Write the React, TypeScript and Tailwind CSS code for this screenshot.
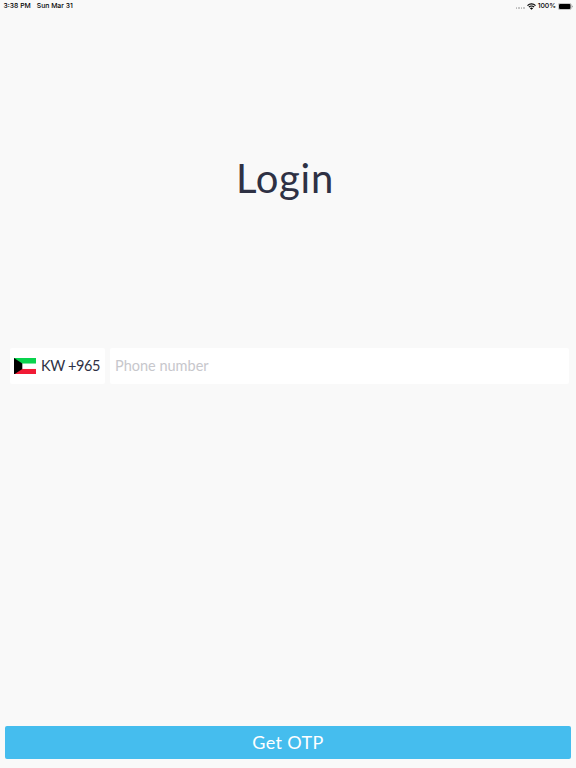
function WifiIcon() {
  return (
    <svg className="h-[7px] w-[9px]" viewBox="0 0 18 14" aria-hidden="true">
      <path d="M1 5.2a11.5 11.5 0 0 1 16 0M3.8 8.3a7.4 7.4 0 0 1 10.4 0" fill="none" stroke="#000" strokeWidth="2.5" />
      <path d="M9 13.5 5.8 10.3a4.6 4.6 0 0 1 6.4 0z" fill="#000" />
    </svg>
  );
}

function BatteryIcon() {
  return (
    <svg className="h-[7px] w-[15px]" viewBox="0 0 30 14" aria-hidden="true">
      <rect x="0.5" y="0.8" width="26" height="12.4" rx="3" fill="none" stroke="#888" />
      <rect x="2" y="2" width="23" height="10" rx="2" fill="#000" />
      <path d="M28 5v4c1.8-.7 1.8-3.3 0-4z" fill="#777" />
    </svg>
  );
}

function KuwaitFlag() {
  return (
    <svg className="h-[16.5px] w-[22.5px] shrink-0" viewBox="0 0 23 17" preserveAspectRatio="none" aria-hidden="true">
      <path d="M0 0h23v17H0z" fill="#fff" />
      <path d="M0 0h23v5.7H0z" fill="#09d34d" />
      <path d="M0 11.3h23V17H0z" fill="#f11b35" />
      <path d="M0 0l8.5 5.7v5.6L0 17z" fill="#000" />
    </svg>
  );
}

function StatusBar() {
  return (
    <header className="flex h-3 items-center justify-between pr-[3px] pl-[3.5px] text-[6.8px] leading-3 font-medium text-black">
      <div className="flex gap-1.5">
        <span>3:38 PM</span>
        <span>Sun Mar 31</span>
      </div>
      <div className="flex items-center">
        <div className="mt-1 mr-[2px] flex gap-[1px]">
          <i className="size-[1.5px] rounded-full bg-[#b5b5b5]" />
          <i className="size-[1.5px] rounded-full bg-[#b5b5b5]" />
          <i className="size-[1.5px] rounded-full bg-[#b5b5b5]" />
          <i className="size-[1.5px] rounded-full bg-[#b5b5b5]" />
        </div>
        <WifiIcon />
        <span className="mr-0.5 ml-0.5">100%</span>
        <BatteryIcon />
      </div>
    </header>
  );
}

export default function App() {
  return (
    <div className="flex h-screen flex-col bg-[#f9f9f9] font-['Inter',sans-serif]">
      <StatusBar />
      <main className="flex flex-1 flex-col font-['Lato',sans-serif]">
        <h1 className="mt-[136px] mr-[6px] h-[60px] text-center text-[40px] leading-[60px] tracking-[0.7px] text-[#2e3144]">
          Login
        </h1>
        <div className="mt-[140px] flex h-9 gap-[5px] pr-[7px] pl-[10px]">
          <button
            type="button"
            className="flex w-[95px] shrink-0 items-center gap-[5px] rounded-[2px] bg-white pl-[3.5px] text-[14.5px] tracking-[-0.4px] whitespace-nowrap text-[#2e3144]"
          >
            <KuwaitFlag />
            <span>KW +965</span>
          </button>
          <input
            type="tel"
            placeholder="Phone number"
            className="min-w-0 flex-1 rounded-[2px] bg-white px-[5px] text-[14.5px] outline-none placeholder:text-[#c7c7cc]"
          />
        </div>
        <button
          type="button"
          className="mt-auto mr-[5px] mb-[9.5px] ml-[5px] h-[32.5px] rounded-[2px] bg-[#45bdee] text-[18px] tracking-[0.4px] text-white"
        >
          Get OTP
        </button>
      </main>
    </div>
  );
}
